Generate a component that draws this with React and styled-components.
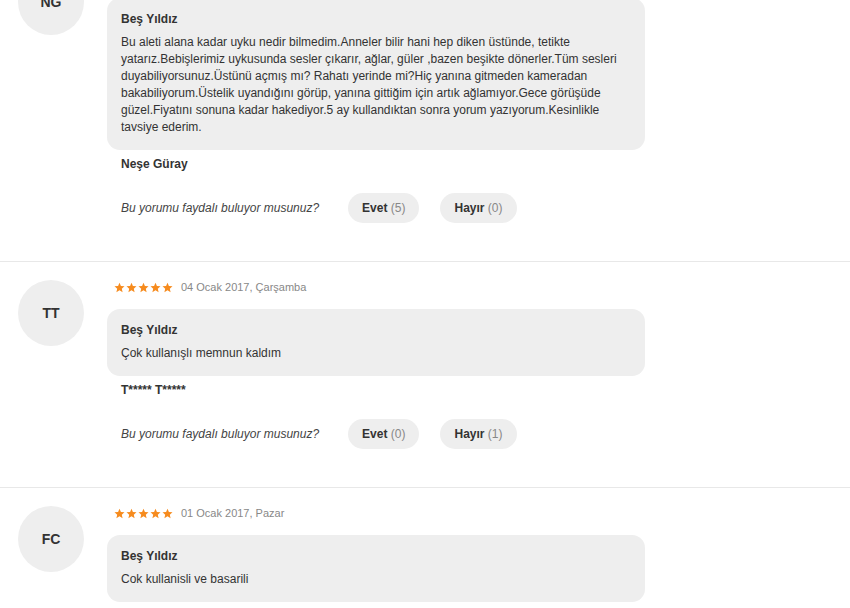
import React from 'react';
import styled, { createGlobalStyle } from 'styled-components';

const GlobalStyle = createGlobalStyle`
  html, body {
    margin: 0;
    padding: 0;
    background: #ffffff;
    font-family: 'Liberation Sans', Arial, sans-serif;
    color: #333333;
    overflow: hidden;
  }
`;

const List = styled.div`
  margin-top: -49px;
  width: 850px;
`;

const Review = styled.div`
  display: flex;
  align-items: flex-start;
  gap: 23px;
  padding: 18px 0 38px 18px;
  border-bottom: 1px solid #e8e8e8;
`;

const Avatar = styled.div`
  flex: 0 0 66px;
  width: 66px;
  height: 66px;
  border-radius: 50%;
  background: #eeeeee;
  display: flex;
  align-items: center;
  justify-content: center;
  font-size: 14px;
  font-weight: bold;
  color: #333333;
`;

const Body = styled.div`
  width: 538px;
  display: flex;
  flex-direction: column;
`;

const Meta = styled.div`
  display: flex;
  align-items: center;
  gap: 8px;
  height: 14px;
  padding-left: 7px;
  margin-bottom: 15px;
  font-size: 11px;
  color: #888888;
`;

const Stars = styled.div`
  display: flex;
  gap: 1px;
`;

const Bubble = styled.div`
  background: #eeeeee;
  border-radius: 13px;
  padding: 13px 14px 14px;
  font-size: 12px;
  line-height: 17px;
  color: #333333;
`;

const Title = styled.div`
  font-weight: bold;
  margin-bottom: 6px;
`;

const Author = styled.div`
  margin-top: 6px;
  padding-left: 14px;
  font-size: 12px;
  line-height: 17px;
  font-weight: bold;
  color: #333333;
`;

const Helpful = styled.div`
  display: flex;
  align-items: center;
  margin-top: 20px;
  padding-left: 14px;
`;

const Question = styled.span`
  font-size: 12px;
  font-style: italic;
  color: #444444;
  margin-right: 29px;
`;

const VoteButton = styled.button`
  height: 30px;
  padding: 0 14px;
  margin-right: 21px;
  border: none;
  border-radius: 15px;
  background: #eeeeee;
  font-family: inherit;
  font-size: 12px;
  font-weight: bold;
  color: #333333;
  cursor: pointer;

  span {
    font-weight: normal;
    color: #888888;
  }
`;

const Star = () => (
  <svg width="11" height="11" viewBox="0 0 24 24">
    <path
      fill="#f68b1e"
      d="M12 1.5l3.1 7.2 7.8.7-5.9 5.2 1.8 7.7L12 18.2l-6.8 4.1L7 14.6 1.1 9.4l7.8-.7z"
    />
  </svg>
);

const reviews = [
  {
    initials: 'NG',
    date: '07 Ocak 2017, Cumartesi',
    text:
      'Bu aleti alana kadar uyku nedir bilmedim.Anneler bilir hani hep diken üstünde, tetikte yatarız.Bebişlerimiz uykusunda sesler çıkarır, ağlar, güler ,bazen beşikte dönerler.Tüm sesleri duyabiliyorsunuz.Üstünü açmış mı? Rahatı yerinde mi?Hiç yanına gitmeden kameradan bakabiliyorum.Üstelik uyandığını görüp, yanına gittiğim için artık ağlamıyor.Gece görüşüde güzel.Fiyatını sonuna kadar hakediyor.5 ay kullandıktan sonra yorum yazıyorum.Kesinlikle tavsiye ederim.',
    author: 'Neşe Güray',
    yes: 5,
    no: 0,
  },
  {
    initials: 'TT',
    date: '04 Ocak 2017, Çarşamba',
    text: 'Çok kullanışlı memnun kaldım',
    author: 'T***** T*****',
    yes: 0,
    no: 1,
  },
  {
    initials: 'FC',
    date: '01 Ocak 2017, Pazar',
    text: 'Cok kullanisli ve basarili',
    author: 'F***** C*****',
    yes: 0,
    no: 0,
  },
];

const App = () => (
  <>
    <GlobalStyle />
    <List>
      {reviews.map((r) => (
        <Review key={r.initials}>
          <Avatar>{r.initials}</Avatar>
          <Body>
            <Meta>
              <Stars>
                {[0, 1, 2, 3, 4].map((i) => (
                  <Star key={i} />
                ))}
              </Stars>
              {r.date}
            </Meta>
            <Bubble>
              <Title>Beş Yıldız</Title>
              {r.text}
            </Bubble>
            <Author>{r.author}</Author>
            <Helpful>
              <Question>Bu yorumu faydalı buluyor musunuz?</Question>
              <VoteButton>
                Evet <span>({r.yes})</span>
              </VoteButton>
              <VoteButton>
                Hayır <span>({r.no})</span>
              </VoteButton>
            </Helpful>
          </Body>
        </Review>
      ))}
    </List>
  </>
);

export default App;
